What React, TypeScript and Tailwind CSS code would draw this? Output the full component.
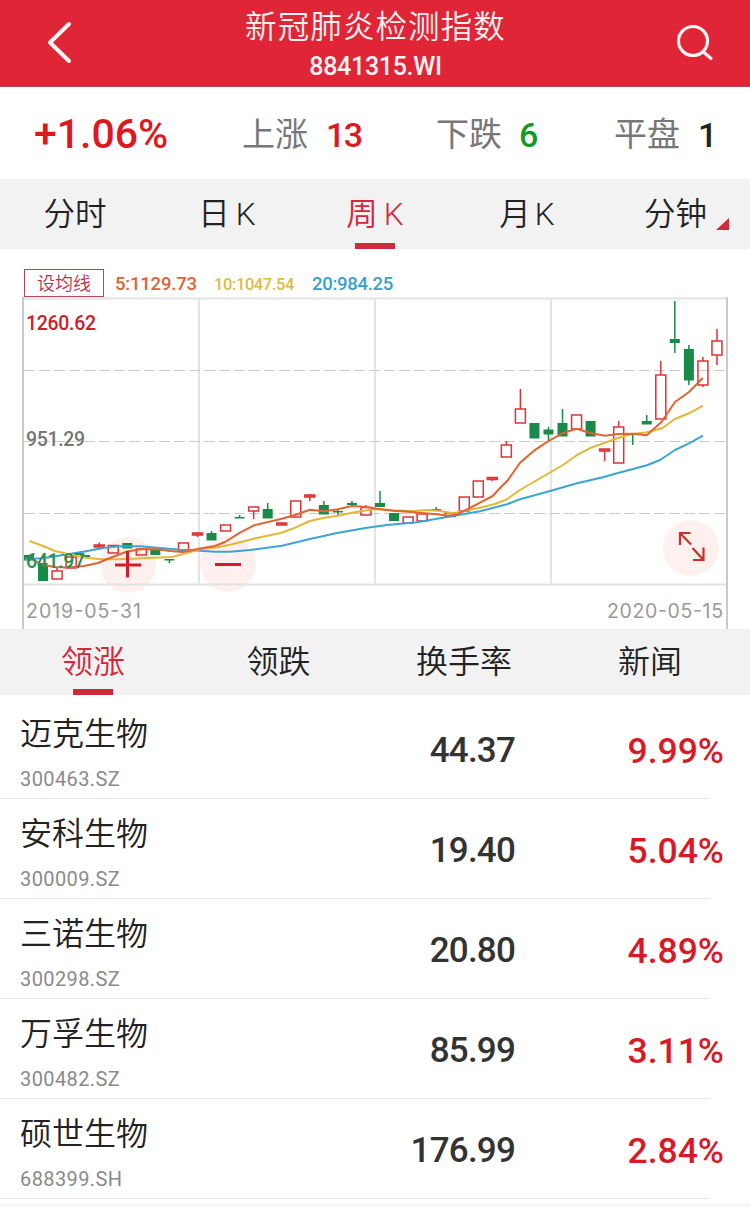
import React from 'react';

type CandleType = 'up' | 'flatUp' | 'down';

// [type, body top, body bottom, high, low]
type Candle = [CandleType, number, number, number, number];

interface Stock {
  name: string;
  code: string;
  price: string;
  change: string;
}

const CANDLE_START = 29;
const CANDLE_STEP = 14.04;

const candles: Candle[] = [
  ['down', 555, 560.5, 555, 560],
  ['down', 565, 581, 563, 581],
  ['up', 571, 579, 567, 579],
  ['up', 557, 568, 557, 568],
  ['down', 555, 557, 555, 557],
  ['flatUp', 545, 547, 542.5, 549],
  ['up', 545.5, 553, 545, 553],
  ['down', 543, 548.5, 543, 548],
  ['up', 549, 555, 549, 555],
  ['down', 550, 555, 550, 555],
  ['down', 559, 560.5, 559, 563],
  ['up', 543, 551, 543, 551],
  ['flatUp', 533, 535, 532, 537],
  ['down', 533, 540.5, 531, 540],
  ['up', 525, 531, 525, 531],
  ['down', 517, 518.5, 515, 518],
  ['up', 507, 511, 507, 519],
  ['down', 509, 518.5, 503, 518],
  ['flatUp', 523, 525, 522, 525],
  ['up', 501, 517, 501, 517],
  ['flatUp', 495, 497, 494, 501],
  ['down', 505, 514.5, 501, 514],
  ['down', 511, 512.5, 510, 515],
  ['down', 503, 505, 501, 505],
  ['up', 507.5, 515, 505, 515],
  ['down', 503, 507, 491, 507],
  ['down', 513, 521, 513, 521],
  ['up', 517, 523, 517, 523],
  ['up', 514, 521, 514, 521],
  ['down', 509, 510.5, 507, 510],
  ['up', 513, 516.5, 513, 516],
  ['up', 497, 511, 497, 511],
  ['up', 481, 497, 481, 497],
  ['flatUp', 477.5, 479.5, 477, 481],
  ['up', 445, 457, 441, 457],
  ['up', 409, 423, 389, 423],
  ['down', 423, 438.5, 423, 438],
  ['down', 429.5, 434.5, 427, 441],
  ['down', 423, 436.5, 409, 436],
  ['up', 415, 429, 415, 429],
  ['down', 421, 436.5, 421, 436],
  ['flatUp', 449, 451, 449, 461],
  ['up', 427, 463, 421, 463],
  ['down', 433, 434, 433, 445],
  ['down', 421, 424.5, 415, 424],
  ['up', 375, 419, 361, 419],
  ['down', 339, 343, 301, 353],
  ['down', 349, 380.5, 345, 385],
  ['up', 361, 385, 357, 387],
  ['up', 341, 355, 329, 365],
];

const ma5 =
  '36,561 43,565 55,567 67,567.5 84,566 98,563 110,558 118,555 127,551.5 143,549 157,549.3 170,551 183,552 200,548.5 215,546 225,542 240,532.7 254,525.3 281.7,518.7 295,515 310,509.7 323.5,511.3 338,509.3 351.7,506 366.7,507 376.7,508.7 393,510.7 408,511.7 421.7,513 436.7,514.3 448,515.7 456.7,514.3 468,509 480,502.7 492.7,496 500,488 508,480 520,462.7 534,450.7 548,441.3 563,433 576.7,428.7 590,433 605,435.7 618,434 633,433.7 646.7,435.3 661.7,421.7 675,402 689,392 702.7,378';
const ma10 =
  '29.5,541 43,546 55,551 72,555 87,558 103,559.3 118,559.3 133,558.7 153,557.7 172,557 187,553 200,549.3 215,547.7 230,544.7 240,542.3 256.7,538 281.7,532.7 295,527.7 310,521 323,518 338,515.7 352,512.7 367,510.3 377,509 393,510.3 413,511 427,510 440,511 453,513.3 468,510.3 480,507.7 495,504 507,499.3 520,490 537,480 551,472 563,465 577,455 591,447.7 605,442.7 618,438 632,434 647,432.3 662,428.3 675,419 689,413.3 703,405.7';
const ma20 =
  '25,559 43,558.3 63,555 83,551.7 105,547.7 120,546.3 140,546.3 160,548 180,549.7 200,550.7 215,551.7 230,551.7 250,550 282,545.7 310,539 337,533 367,527.7 387,525 417,522.3 447,517 480,511.3 507,504.3 520,499.3 551,490.7 577,483.3 603,477.3 618,473 647,465.3 660,460 675,450 689,443.3 703,435.7';

const stocks: Stock[] = [
  { name: '迈克生物', code: '300463.SZ', price: '44.37', change: '9.99%' },
  { name: '安科生物', code: '300009.SZ', price: '19.40', change: '5.04%' },
  { name: '三诺生物', code: '300298.SZ', price: '20.80', change: '4.89%' },
  { name: '万孚生物', code: '300482.SZ', price: '85.99', change: '3.11%' },
  { name: '硕世生物', code: '688399.SH', price: '176.99', change: '2.84%' },
];

const Header: React.FC = () => (
  <header className="flex h-[87px] items-center justify-between border-b border-[#c9434d] bg-[#df2536] pl-[46px] pr-[36px] text-[#fff3f3]">
    <svg className="h-[44px] w-[28px]" viewBox="0 0 28 44" fill="none" stroke="currentColor" strokeWidth="4" strokeLinecap="round" strokeLinejoin="round">
      <path d="M23 3L4 21.500L23 40" />
    </svg>
    <div className="flex h-full flex-col items-center pl-[1px]">
      <h1 className="mt-[6px] text-[31.5px] font-[350] leading-[44px] tracking-[1.1px]">新冠肺炎检测指数</h1>
      <div className="mt-[-2px] text-[25px] font-medium leading-[38px] tracking-[-0.3px]">8841315.WI</div>
    </div>
    <svg className="h-[38px] w-[38px]" viewBox="0 0 38 38" fill="none" stroke="currentColor" strokeWidth="3.2" strokeLinecap="round">
      <circle cx="17" cy="17" r="14.500" />
      <path d="M27.500 28L35 34.500" />
    </svg>
  </header>
);

const Summary: React.FC = () => (
  <section className="flex h-[92px] items-center bg-white pt-[3px] text-[33px] text-[#777]">
    <div className="w-[242px] pl-[34px] text-[41px] font-medium text-[#df1720]">+1.06%</div>
    <div className="flex w-[194px] items-center">
      上涨<span className="ml-[18px] text-[34px] font-medium leading-none tracking-[-1.5px] text-[#df1720]">13</span>
    </div>
    <div className="flex w-[178px] items-center">
      下跌<span className="ml-[17px] text-[34px] font-medium leading-none text-[#14981f]">6</span>
    </div>
    <div className="flex items-center">
      平盘<span className="ml-[18px] text-[34px] font-medium leading-none text-[#222]">1</span>
    </div>
  </section>
);

const PeriodTabs: React.FC = () => (
  <nav className="flex h-[70px] bg-[#f2f2f2] text-[31.5px] font-[350] leading-[72px] text-[#222]">
    <div className="w-[150px] text-center">分时</div>
    <div className="w-[154px] text-center">日<span className="ml-[6px]">K</span></div>
    <div className="flex w-[142px] flex-col items-center text-[#d0283c]">
      <div className="h-[64px]">周<span className="ml-[6px]">K</span></div>
      <div className="h-[6px] w-[40px] bg-[#cd2b3c]" />
    </div>
    <div className="w-[162px] text-center">月<span className="ml-[4px]">K</span></div>
    <div className="flex items-start pl-[36px]">
      分钟
      <svg className="ml-[9px] mt-[39px] h-[12px] w-[13px]" viewBox="0 0 13 12">
        <path d="M0 12L13 0V12Z" fill="#d0283c" />
      </svg>
    </div>
  </nav>
);

const CandleShape: React.FC<{ candle: Candle; x: number }> = ({ candle, x }) => {
  const [type, top, bottom, high, low] = candle;
  if (type === 'down') {
    return (
      <g fill="#198b48">
        <rect x={x - 0.75} y={high} width="1.5" height={low - high} />
        <rect x={x - 5} y={top} width="10" height={bottom - top} />
      </g>
    );
  }
  return (
    <g stroke="#da3438" strokeWidth="1.5" fill={type === 'up' ? 'none' : '#ee5550'}>
      <path d={`M${x} ${high}V${top}M${x} ${bottom}V${low}`} />
      <rect x={x - 5} y={top} width="10" height={bottom - top} />
    </g>
  );
};

const KLineChart: React.FC = () => (
  <svg className="block h-[332px] w-[750px]" viewBox="0 297 750 332" fill="none">
    <circle cx="128" cy="565" r="28" fill="#fff0f0" />
    <circle cx="228" cy="564" r="28" fill="#fff0f0" />
    <circle cx="691" cy="548" r="28" fill="#fff0f0" />

    {/* grid */}
    <g stroke="#e2e2e2" strokeWidth="1.8">
      <path d="M22 298.500H728M22 584.500H728" />
      <path d="M199 298V583M375 298V583M551 298V583" />
    </g>
    <path d="M24 370.500H727M24 441.500H727M24 513.500H727" stroke="#cbcbcb" strokeWidth="1.2" strokeDasharray="11 4" />
    <path d="M23 297V629M727 297V629" stroke="#cacaca" strokeWidth="2" />

    {candles.map((candle, i) => (
      <CandleShape key={i} candle={candle} x={CANDLE_START + i * CANDLE_STEP} />
    ))}

    <g strokeWidth="2" strokeLinejoin="round">
      <polyline points={ma20} stroke="#3ca5d3" />
      <polyline points={ma10} stroke="#e1b83a" />
      <polyline points={ma5} stroke="#e16432" />
    </g>

    <g className="text-[19.5px] font-medium">
      <text x="26" y="330" textLength="70" fill="#c8222a">1260.62</text>
      <text x="26" y="446" textLength="59" fill="#757575">951.29</text>
      <text x="26" y="568" textLength="59" fill="#2f8c51">641.97</text>
    </g>
    <g className="font-['Inter'] text-[19.5px]" fill="#999">
      <text x="26" y="618" textLength="115">2019-05-31</text>
      <text x="607" y="618" textLength="116">2020-05-15</text>
    </g>

    {/* zoom in / zoom out / full screen */}
    <g stroke="#cf2029" strokeWidth="3">
      <path d="M115 565H141M127.500 551V577.500" />
      <path d="M215 564.500H241" />
    </g>
    <g stroke="#cb3029" strokeWidth="2.2">
      <path d="M680 545V533H690.500M680 533L691 544.500" />
      <path d="M693 560H703.500V547.500M692.500 548L703.500 560" />
    </g>
  </svg>
);

const ChartSection: React.FC = () => (
  <section className="bg-white">
    <div className="flex h-[48px] items-end pl-[24px] font-medium">
      <div className="h-[28px] w-[80px] border border-[#b4485a] text-center text-[18px] font-[350] leading-[27px] text-[#bc3050]">设均线</div>
      <div className="ml-[11px] w-[99px] text-[18.5px] leading-[26px] tracking-[-0.2px] text-[#dd6435]">5:1129.73</div>
      <div className="w-[98px] text-[16.5px] leading-[24px] tracking-[-0.4px] text-[#dfbb42]">10:1047.54</div>
      <div className="text-[18.5px] leading-[26px] tracking-[-0.3px] text-[#38a0cf]">20:984.25</div>
    </div>
    <KLineChart />
  </section>
);

const RankTabs: React.FC = () => (
  <nav className="flex h-[66px] bg-[#f2f2f2] text-[32px] font-[350] leading-[67px] text-[#222]">
    <div className="flex w-[186px] flex-col items-center text-[#d4263a]">
      <div className="h-[60px]">领涨</div>
      <div className="h-[6px] w-[40px] bg-[#cd2b3c]" />
    </div>
    <div className="w-[185px] text-center">领跌</div>
    <div className="w-[186px] text-center">换手率</div>
    <div className="w-[186px] text-center">新闻</div>
  </nav>
);

const StockRow: React.FC<{ stock: Stock }> = ({ stock }) => (
  <div className="mr-[40px] flex h-[100px] border-b border-[#e6e6e6]">
    <div className="w-[316px] pl-[20px]">
      <div className="mt-[11px] text-[32px] font-[350] leading-[48px] text-[#222]">{stock.name}</div>
      <div className="mt-[6px] text-[20px] leading-[30px] tracking-[0.4px] text-[#8a8a8a]">{stock.code}</div>
    </div>
    <div className="mt-[7px] w-[199px] text-right text-[35px] font-medium leading-[90px] tracking-[-0.8px] text-[#333]">{stock.price}</div>
    <div className="mr-[-14px] mt-[7px] flex-1 text-right text-[35.5px] font-medium leading-[90px] text-[#d81a27]">{stock.change}</div>
  </div>
);

const App: React.FC = () => (
  <div className="flex h-[1207px] w-[750px] flex-col overflow-hidden bg-[#f8f8fa] font-['Roboto','Noto_Sans_CJK_SC',sans-serif]">
    <Header />
    <Summary />
    <PeriodTabs />
    <ChartSection />
    <RankTabs />
    <main className="h-[508px] bg-white pt-[4px]">
      {stocks.map((stock) => (
        <StockRow key={stock.code} stock={stock} />
      ))}
    </main>
  </div>
);

export default App;
